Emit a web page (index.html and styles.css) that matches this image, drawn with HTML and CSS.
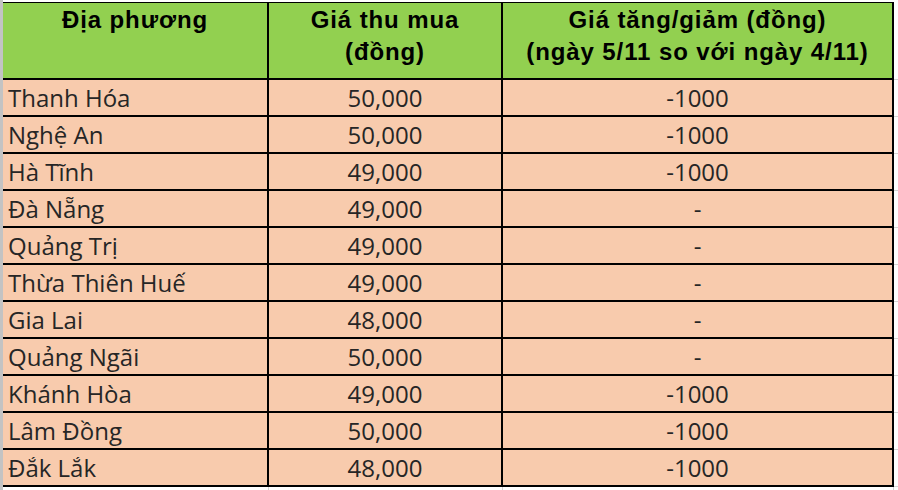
FILE: index.html
```html
<!DOCTYPE html>
<html lang="vi">
<head>
<meta charset="utf-8">
<title>Giá thu mua</title>
<link rel="stylesheet" href="styles.css">
</head>
<body>
<div class="sheet">
  <table class="price">
    <colgroup>
      <col class="c-place">
      <col class="c-buy">
      <col class="c-diff">
      <col class="c-gutter">
    </colgroup>
    <thead>
      <tr>
        <th>Địa phương</th>
        <th>Giá thu mua<br>(đồng)</th>
        <th>Giá tăng/giảm (đồng)<br>(ngày 5/11 so với ngày 4/11)</th>
        <td class="gutter"></td>
      </tr>
    </thead>
    <tbody>
      <tr><td class="place">Thanh Hóa</td><td class="num">50,000</td><td class="num">-1000</td><td class="gutter"></td></tr>
      <tr><td class="place">Nghệ An</td><td class="num">50,000</td><td class="num">-1000</td><td class="gutter"></td></tr>
      <tr><td class="place">Hà Tĩnh</td><td class="num">49,000</td><td class="num">-1000</td><td class="gutter"></td></tr>
      <tr><td class="place">Đà Nẵng</td><td class="num">49,000</td><td class="num">-</td><td class="gutter"></td></tr>
      <tr><td class="place">Quảng Trị</td><td class="num">49,000</td><td class="num">-</td><td class="gutter"></td></tr>
      <tr><td class="place">Thừa Thiên Huế</td><td class="num">49,000</td><td class="num">-</td><td class="gutter"></td></tr>
      <tr><td class="place">Gia Lai</td><td class="num">48,000</td><td class="num">-</td><td class="gutter"></td></tr>
      <tr><td class="place">Quảng Ngãi</td><td class="num">50,000</td><td class="num">-</td><td class="gutter"></td></tr>
      <tr><td class="place">Khánh Hòa</td><td class="num">49,000</td><td class="num">-1000</td><td class="gutter"></td></tr>
      <tr><td class="place">Lâm Đồng</td><td class="num">50,000</td><td class="num">-1000</td><td class="gutter"></td></tr>
      <tr><td class="place">Đắk Lắk</td><td class="num">48,000</td><td class="num">-1000</td><td class="gutter"></td></tr>
      <tr class="tail"><td></td><td></td><td></td><td class="gutter"></td></tr>
    </tbody>
  </table>
</div>
</body>
</html>
```
FILE: styles.css
```css
html, body {
  margin: 0;
  padding: 0;
  background: #ffffff;
}

body {
  width: 898px;
  height: 490px;
  overflow: hidden;
}

.sheet {
  border-left: 3px solid #c3c3c3;
  padding-top: 2px;
}

.price {
  border-collapse: separate;
  border-spacing: 0;
  table-layout: fixed;
  width: 895px;
}

.c-place { width: 266px; }
.c-buy { width: 234px; }
.c-diff { width: 391px; }
.c-gutter { width: 4px; }

.price th {
  background: #92d050;
  color: #000;
  font-family: "Liberation Sans", Arial, sans-serif;
  font-weight: bold;
  font-size: 24px;
  letter-spacing: 0.9px;
  line-height: 32px;
  text-align: center;
  vertical-align: top;
  padding: 1px 0 0;
  height: 74px;
  border-top: 1px solid #000;
  border-right: 2px solid #000;
  border-bottom: 2px solid #000;
}

.price td {
  background: #f8cbad;
  color: #262626;
  font-family: "Open Sans", "Noto Sans", sans-serif;
  font-size: 24px;
  line-height: 35px;
  height: 35px;
  padding: 0;
  border-right: 2px solid #000;
  border-bottom: 2px solid #000;
  white-space: nowrap;
}

.price td.place {
  padding-left: 5px;
  text-align: left;
}

.price td.num {
  text-align: center;
}

.price td.gutter {
  background: #fff;
  border-right: none;
  border-bottom: 1px solid #d4d4d4;
}

.price tr.tail td {
  background: #fff;
  height: 3px;
  line-height: 3px;
  border-bottom: none;
  border-right: 1px solid #d4d4d4;
}

.price tr.tail td.gutter {
  border-right: none;
}
```
